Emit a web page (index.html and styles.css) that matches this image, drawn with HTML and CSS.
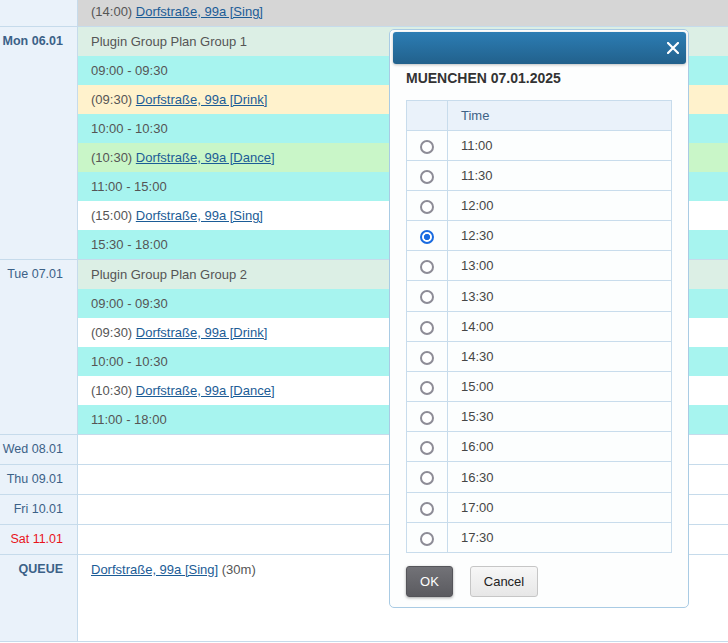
FILE: index.html
```html
<!DOCTYPE html>
<html lang="de">
<head>
<meta charset="utf-8">
<title>Plan</title>
<link rel="stylesheet" href="styles.css">
</head>
<body>
<div class="schedule">
  <div class="grp">
    <div class="day"></div>
    <div class="slots">
      <div class="slot top s-gray">(14:00) <a href="#">Dorfstraße, 99a [Sing]</a></div>
    </div>
  </div>
  <div class="grp">
    <div class="day strong">Mon 06.01</div>
    <div class="slots">
      <div class="slot s-mint">Plugin Group Plan Group 1</div>
      <div class="slot s-cyan">09:00 - 09:30</div>
      <div class="slot s-yellow">(09:30) <a href="#">Dorfstraße, 99a [Drink]</a></div>
      <div class="slot s-cyan">10:00 - 10:30</div>
      <div class="slot s-green">(10:30) <a href="#">Dorfstraße, 99a [Dance]</a></div>
      <div class="slot s-cyan">11:00 - 15:00</div>
      <div class="slot">(15:00) <a href="#">Dorfstraße, 99a [Sing]</a></div>
      <div class="slot s-cyan">15:30 - 18:00</div>
    </div>
  </div>
  <div class="grp">
    <div class="day">Tue 07.01</div>
    <div class="slots">
      <div class="slot s-mint">Plugin Group Plan Group 2</div>
      <div class="slot s-cyan">09:00 - 09:30</div>
      <div class="slot">(09:30) <a href="#">Dorfstraße, 99a [Drink]</a></div>
      <div class="slot s-cyan">10:00 - 10:30</div>
      <div class="slot">(10:30) <a href="#">Dorfstraße, 99a [Dance]</a></div>
      <div class="slot s-cyan">11:00 - 18:00</div>
    </div>
  </div>
  <div class="grp">
    <div class="day">Wed 08.01</div>
    <div class="slots"><div class="slot"></div></div>
  </div>
  <div class="grp">
    <div class="day">Thu 09.01</div>
    <div class="slots"><div class="slot"></div></div>
  </div>
  <div class="grp">
    <div class="day">Fri 10.01</div>
    <div class="slots"><div class="slot"></div></div>
  </div>
  <div class="grp">
    <div class="day weekend">Sat 11.01</div>
    <div class="slots"><div class="slot"></div></div>
  </div>
  <div class="grp">
    <div class="day strong">QUEUE</div>
    <div class="slots"><div class="slot queue"><a href="#">Dorfstraße, 99a [Sing]</a> (30m)</div></div>
  </div>
</div>

<div class="dialog">
  <div class="dialog-bar">
    <button class="close" type="button" aria-label="close">
      <svg width="12" height="12" viewBox="0 0 12 12"><path d="M1 1L11 11M11 1L1 11" stroke="#fff" stroke-width="2.2" stroke-linecap="square"/></svg>
    </button>
  </div>
  <div class="dialog-body">
    <h2 class="dialog-title">MUENCHEN 07.01.2025</h2>
    <table class="times">
      <thead><tr><th class="pick"></th><th>Time</th></tr></thead>
      <tbody>
        <tr><td class="pick"><input type="radio" name="t"></td><td>11:00</td></tr>
        <tr><td class="pick"><input type="radio" name="t"></td><td>11:30</td></tr>
        <tr><td class="pick"><input type="radio" name="t"></td><td>12:00</td></tr>
        <tr><td class="pick"><input type="radio" name="t" checked></td><td>12:30</td></tr>
        <tr><td class="pick"><input type="radio" name="t"></td><td>13:00</td></tr>
        <tr><td class="pick"><input type="radio" name="t"></td><td>13:30</td></tr>
        <tr><td class="pick"><input type="radio" name="t"></td><td>14:00</td></tr>
        <tr><td class="pick"><input type="radio" name="t"></td><td>14:30</td></tr>
        <tr><td class="pick"><input type="radio" name="t"></td><td>15:00</td></tr>
        <tr><td class="pick"><input type="radio" name="t"></td><td>15:30</td></tr>
        <tr><td class="pick"><input type="radio" name="t"></td><td>16:00</td></tr>
        <tr><td class="pick"><input type="radio" name="t"></td><td>16:30</td></tr>
        <tr><td class="pick"><input type="radio" name="t"></td><td>17:00</td></tr>
        <tr><td class="pick"><input type="radio" name="t"></td><td>17:30</td></tr>
      </tbody>
    </table>
    <div class="actions">
      <button class="btn btn-ok" type="button">OK</button>
      <button class="btn btn-cancel" type="button">Cancel</button>
    </div>
  </div>
</div>
</body>
</html>
```

FILE: styles.css
```css
html, body {
  margin: 0;
  padding: 0;
  background: #fff;
}

body {
  font-family: "Liberation Sans", Arial, sans-serif;
  font-size: 13px;
  color: #555;
  width: 728px;
  height: 643px;
  overflow: hidden;
  position: relative;
}

a {
  color: #1b5c96;
  text-decoration: underline;
}

/* schedule grid */
.schedule {
  display: flex;
  flex-direction: column;
}

.grp {
  display: flex;
  border-bottom: 1px solid #c6dbeb;
}

.day {
  box-sizing: border-box;
  width: 78px;
  flex: none;
  background: #eaf2fa;
  border-right: 1px solid #c6dbeb;
  text-align: right;
  padding-right: 14px;
  font-size: 12.5px;
  line-height: 29px;
  color: #3b6187;
  white-space: nowrap;
}

.day.strong {
  font-weight: bold;
}

.day.weekend {
  color: #e8141b;
}

.slots {
  flex: 1;
  display: flex;
  flex-direction: column;
}

.slot {
  height: 29px;
  line-height: 29px;
  padding-left: 13px;
  white-space: nowrap;
}

.slot.top {
  height: 26px;
  line-height: 24px;
}

.slot.queue {
  height: 86px;
}

.s-gray { background: #d6d6d6; }
.s-mint { background: #dcefe5; }
.s-cyan { background: #a7f4ef; }
.s-yellow { background: #fff2cc; }
.s-green { background: #c9f6c8; }

/* time picker dialog */
.dialog {
  position: absolute;
  left: 389px;
  top: 29px;
  width: 293px;
  height: 575px;
  border: 1px solid #a9cbe4;
  border-radius: 5px;
  background: #fdfefe;
  padding: 2px 2px 0 3px;
  box-sizing: content-box;
}

.dialog-bar {
  height: 32px;
  border-radius: 3px;
  background: linear-gradient(#2c7db4, #22618c);
  box-shadow: 0 1px 3px rgba(0, 0, 0, 0.25);
  display: flex;
  justify-content: flex-end;
  align-items: center;
}

.close {
  border: 0;
  background: transparent;
  padding: 0;
  margin-right: 7px;
  width: 12px;
  height: 12px;
  display: flex;
}

.dialog-body {
  padding: 0 13px;
}

.dialog-title {
  margin: 6px 0 13px;
  font-size: 14px;
  line-height: 17px;
  font-weight: bold;
  color: #333;
}

.times {
  width: 266px;
  border-collapse: collapse;
  background: #fcfefe;
}

.times th,
.times td {
  border: 1px solid #c8dcec;
  height: 29px;
  padding: 0 0 0 13px;
  text-align: left;
  font-weight: normal;
  color: #464646;
}

.times tbody tr:nth-child(6n) td {
  height: 30px;
}

.times th {
  background: #eaf2fa;
  color: #3e6286;
}

.times .pick {
  width: 41px;
  padding: 0;
  text-align: center;
  box-sizing: border-box;
}

.times input {
  appearance: none;
  -webkit-appearance: none;
  width: 14px;
  height: 14px;
  margin: 2px 0 0 0;
  border: 2px solid #8d8c96;
  border-radius: 50%;
  background: #fff;
  box-sizing: border-box;
  vertical-align: middle;
}

.times input:checked {
  border-color: #1a6be0;
  background: radial-gradient(circle, #1a6be0 0 2.8px, #fff 3.4px);
}

.actions {
  display: flex;
  gap: 17px;
  margin-top: 13px;
}

.btn {
  height: 31px;
  font-family: inherit;
  font-size: 13px;
  border-radius: 3px;
  padding: 0;
}

.btn-ok {
  width: 47px;
  color: #fff;
  border: 1px solid #55555a;
  background: linear-gradient(#727277, #5b5b60);
  box-shadow: 0 1px 3px rgba(0, 0, 0, 0.35);
}

.btn-cancel {
  width: 68px;
  color: #222;
  border: 1px solid #c6c6c6;
  background: linear-gradient(#f7f7f7, #e7e7e7);
}
```
